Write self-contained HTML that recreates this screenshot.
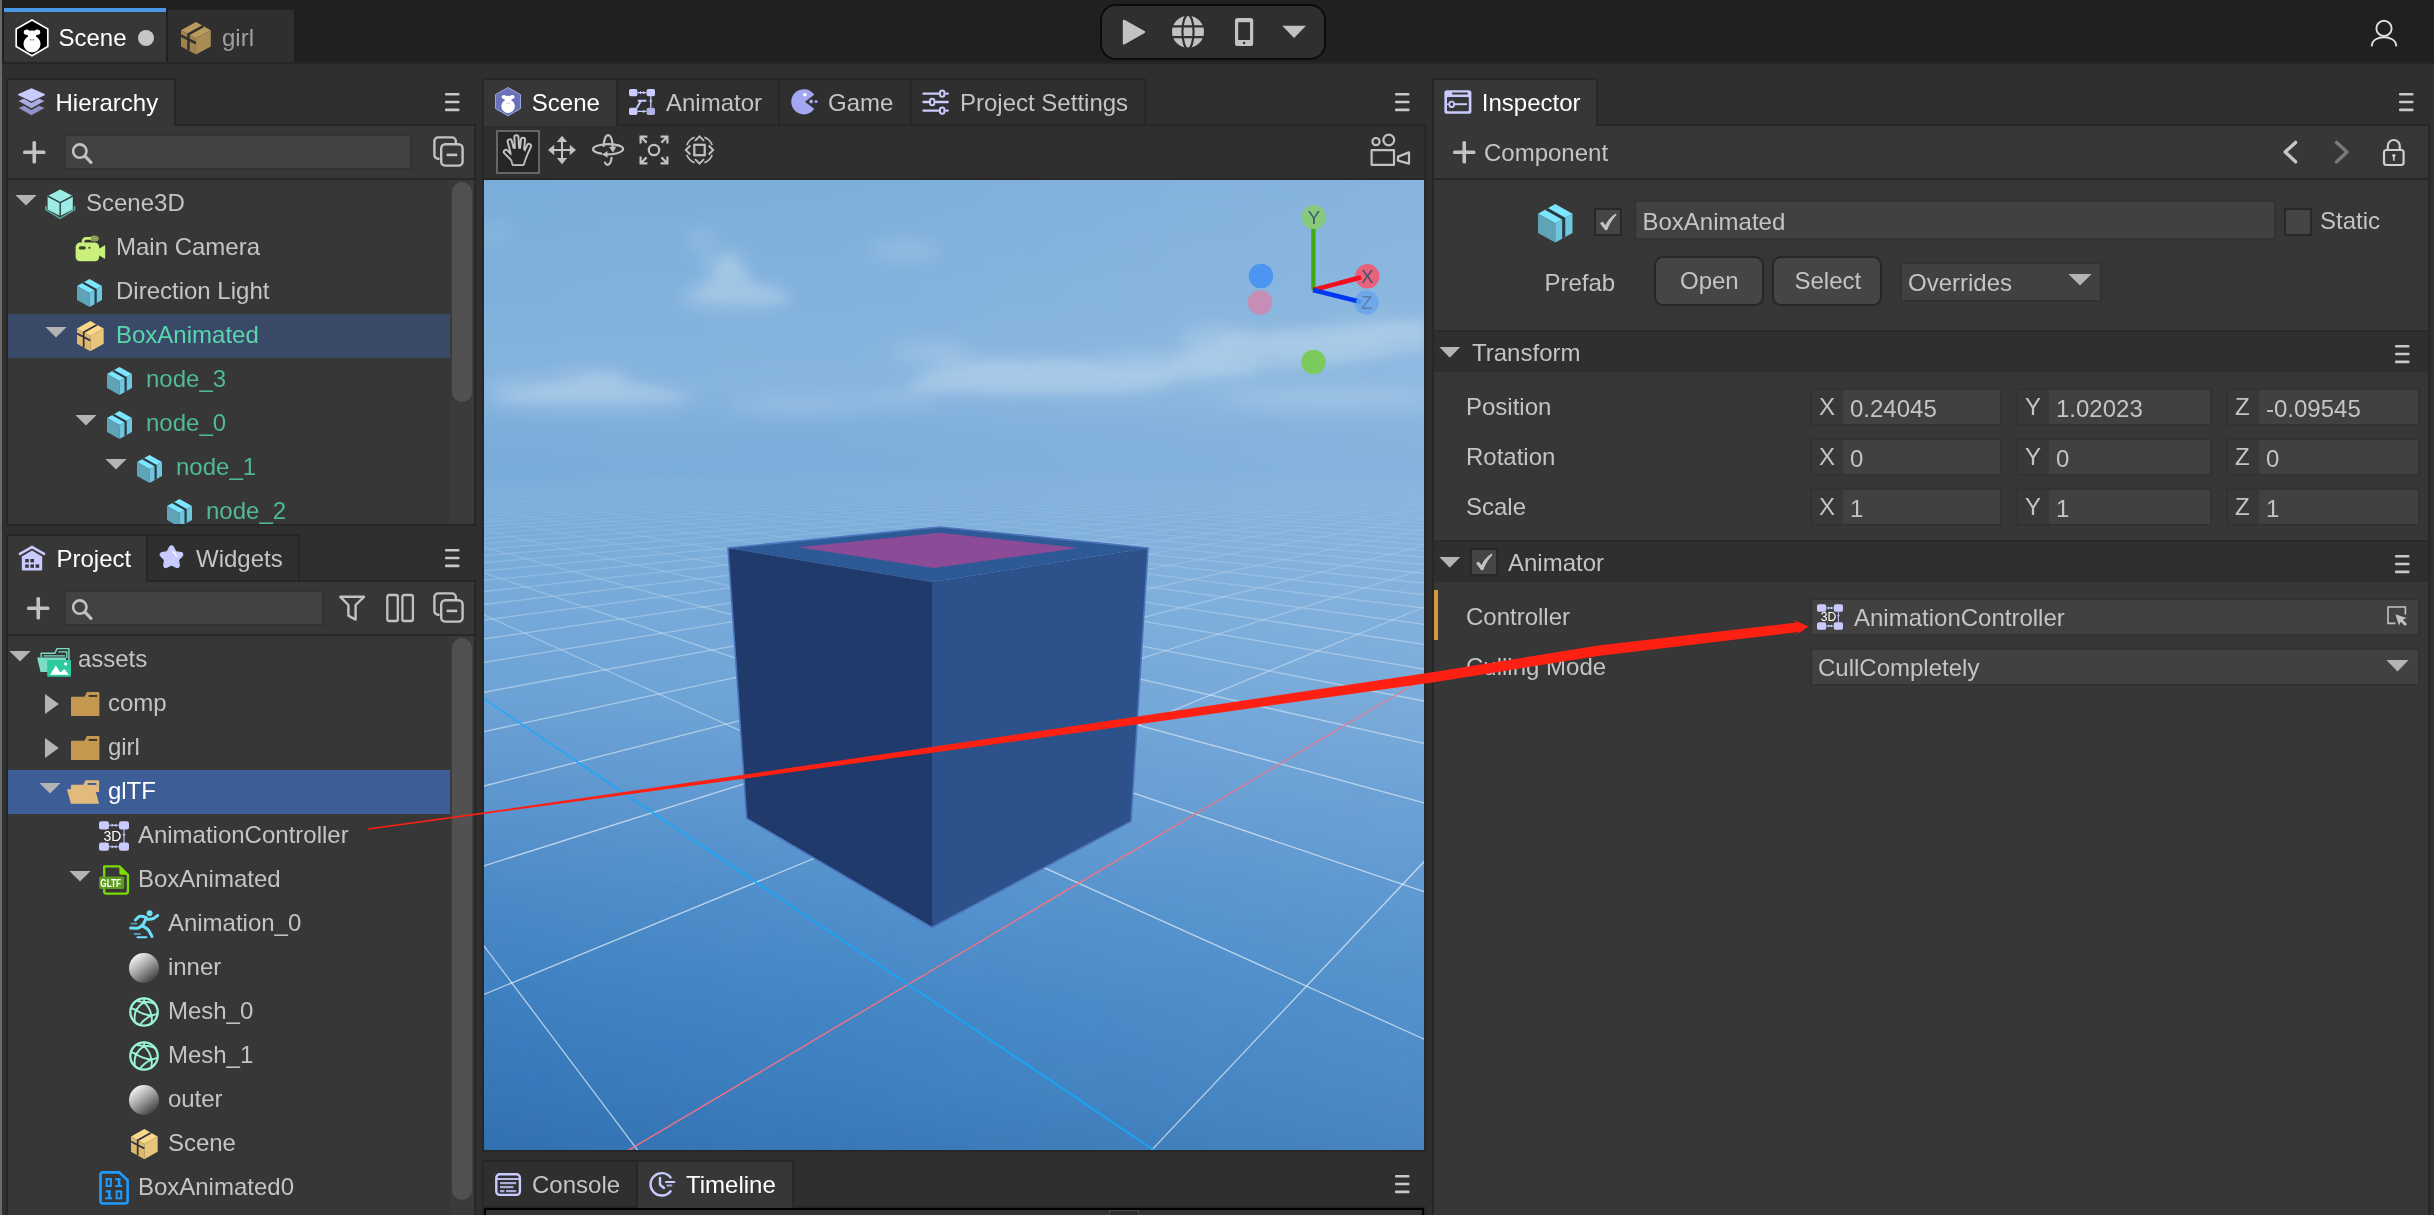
<!DOCTYPE html>
<html><head><meta charset="utf-8"><title>Scene</title><style>
html,body{margin:0;padding:0;background:#2f2f2f;}
body{width:2434px;height:1215px;overflow:hidden;position:relative;font-family:"Liberation Sans",sans-serif;font-size:24px;}
div,span.t,svg{position:absolute;}
#app{left:0;top:0;width:2434px;height:1215px;will-change:transform;}
span.t{line-height:27px;white-space:nowrap;font-size:24px;}
svg{overflow:visible;}
</style></head><body><div id="app">
<div style="left:0px;top:0px;width:2434px;height:1215px;background:#2f2f2f;"></div>
<div style="left:0px;top:0px;width:2434px;height:62px;background:#202020;"></div>
<div style="left:0px;top:62px;width:2434px;height:2px;background:#262626;"></div>
<div style="left:0px;top:0px;width:2px;height:1215px;background:#6a6a6a;"></div>
<div style="left:4px;top:8px;width:162px;height:4px;background:#4a98e8;"></div>
<div style="left:4px;top:12px;width:162px;height:50px;background:#373737;"></div>
<div style="left:168px;top:10px;width:126px;height:52px;background:#2f2f2f;"></div>
<svg style="left:15px;top:19px" width="34" height="38" viewBox="0 0 34 38"><path d="M17 0.9 L32.8 9.9 V27.6 L17 36.8 L1.2 27.6 V9.9 Z" fill="#000" stroke="#fff" stroke-width="1.7" stroke-linejoin="round"/><g transform="translate(17 18.85) scale(1.0)" fill="#fff"><ellipse cx="-5.2" cy="-5.7" rx="3" ry="2.6"/><ellipse cx="5.2" cy="-5.7" rx="3" ry="2.6"/><ellipse cx="0" cy="-4.2" rx="5.4" ry="3.1"/><rect x="-3.7" y="-4" width="7.4" height="5"/><circle cx="0" cy="6.05" r="8.5"/><rect x="-2.2" y="1.55" width="1.7" height="0.9" rx=".4" fill="#000"/><rect x="0.5" y="1.55" width="1.7" height="0.9" rx=".4" fill="#000"/></g></svg>
<span class="t " style="left:58.5px;top:24px;color:#ffffff;">Scene</span>
<div style="left:138px;top:30px;width:16px;height:16px;border-radius:8px;background:#c6c6c6"></div>
<svg style="left:181.1px;top:21.9px" width="29.8" height="32.6" viewBox="0 0 29.8 32.6"><path d="M14.9 0 L29.8 8.15 L14.9 16.3 L0 8.15 Z" fill="#ba9b5d"/><path d="M0 8.15 L14.9 16.3 L14.9 32.6 L0 24.450000000000003 Z" fill="#9f834e"/><path d="M29.8 8.15 L14.9 16.3 L14.9 32.6 L29.8 24.450000000000003 Z" fill="#a98c54"/><path d="M22.35 4.075 L7.45 12.225000000000001 V28.525000000000002 M0 13.6105 L14.9 21.19" fill="none" stroke="#2e2e2e" stroke-width="2.46"/></svg>
<span class="t " style="left:222px;top:24px;color:#a0a0a0;">girl</span>
<div style="left:1100px;top:4px;width:226px;height:56px;border-radius:16px;background:#2f2f2f;border:2px solid #0c0c0c;box-sizing:border-box"></div>
<svg style="left:0px;top:0px" width="2434" height="64" viewBox="0 0 2434 64"><g fill="#c2c2c2"><path d="M1122.8 21.2 Q1122.8 19 1124.8 20 L1144.6 31 Q1146.2 32 1144.6 33 L1124.8 44.2 Q1122.8 45.2 1122.8 43 Z"/></g><g><circle cx="1188" cy="31.8" r="16" fill="#c2c2c2"/><g fill="none" stroke="#2f2f2f" stroke-width="2.2"><path d="M1171 26.4 H1205 M1171 37.2 H1205"/><ellipse cx="1188" cy="31.8" rx="5.6" ry="17"/></g></g><rect x="1235" y="18" width="18.2" height="28" rx="2.6" fill="#c2c2c2"/><rect x="1238.2" y="22.2" width="11.8" height="17.8" fill="#2f2f2f"/><circle cx="1244.1" cy="43" r="1.3" fill="#2f2f2f"/><path d="M1282.2 25.8 H1306 L1294.1 38 Z" fill="#c2c2c2"/></svg>
<svg style="left:0px;top:0px" width="2434" height="64" viewBox="0 0 2434 64"><g fill="none" stroke="#dedede" stroke-width="1.9" stroke-linecap="round"><circle cx="2384" cy="28.4" r="7.6"/><path d="M2371.8 45.6 C2372.6 34.4 2395.4 34.4 2396.2 45.6"/></g></svg>
<div style="left:6px;top:124px;width:470px;height:402px;background:#272727;"></div>
<div style="left:6px;top:78px;width:170px;height:48px;background:#272727;"></div>
<div style="left:8px;top:80px;width:166px;height:46px;background:#373737;"></div>
<div style="left:8px;top:126px;width:466px;height:52px;background:#373737;"></div>
<div style="left:8px;top:180px;width:466px;height:344px;background:#373737;"></div>
<div style="left:450px;top:180px;width:24px;height:344px;background:#3a3a3a;"></div>
<div style="left:452px;top:182px;width:20px;height:220px;border-radius:10px;background:#515151"></div>
<svg style="left:18px;top:88px" width="27" height="28" viewBox="0 0 27 28"><path d="M13.5 14.4 L26.4 20 L13.5 27.2 L0.6 20 Z" fill="#8f92c4"/><path d="M13.5 9 L26.4 14.8 L13.5 22 L0.6 14.8 Z" fill="#363636"/><path d="M13.5 7.2 L26.4 13 L13.5 20.2 L0.6 13 Z" fill="#abaee2"/><path d="M13.5 2 L26.4 7.8 L13.5 15 L0.6 7.8 Z" fill="#363636"/><path d="M13.5 0.2 L26.6 6 Q27.4 6.6 26.6 7.2 L13.5 13.4 L0.4 7.2 Q-0.4 6.6 0.4 6 Z" fill="#c9cbff"/></svg>
<span class="t " style="left:55.5px;top:89px;color:#ffffff;">Hierarchy</span>
<svg style="left:444.5px;top:93px;" width="15" height="19" viewBox="0 0 15 19"><g fill="#c8c8c8"><rect x="0" y="0" width="14.5" height="2.6" rx="1"/><rect x="0" y="7.7" width="14.5" height="2.6" rx="1"/><rect x="0" y="15.6" width="14.5" height="2.6" rx="1"/></g></svg>
<svg style="left:22.75px;top:140.75px" width="22.5" height="22.5" viewBox="0 0 22.5 22.5"><g fill="#c2c2c2"><rect x="0" y="9.45" width="22.5" height="3.6" rx="1.5"/><rect x="9.45" y="0" width="3.6" height="22.5" rx="1.5"/></g></svg>
<div style="left:64.5px;top:134.5px;width:347px;height:35px;background:#323232;"></div>
<div style="left:66px;top:136px;width:344px;height:32px;background:#424242;"></div>
<svg style="left:72px;top:141px" width="22" height="24" viewBox="0 0 22 24"><g fill="none" stroke="#c2c2c2" stroke-width="2.6" stroke-linecap="round"><circle cx="7.8" cy="10.1" r="6.7"/><path d="M12.9 15.2 L19 21.4" stroke-width="3.2"/></g></svg>
<svg style="left:432.5px;top:136.2px" width="32" height="32" viewBox="0 0 32 32"><g fill="none" stroke="#c2c2c2" stroke-width="2.4"><path d="M6.5 22.8 H5.2 A3.8 3.8 0 0 1 1.4 19 V5.2 A3.8 3.8 0 0 1 5.2 1.4 H19 A3.8 3.8 0 0 1 22.8 5.2 V7"/><rect x="8.2" y="8.2" width="21.4" height="21.4" rx="4.2"/><path d="M13.6 18.9 H24.2" stroke-width="2.6"/></g></svg>
<div style="left:8px;top:180px;width:442px;height:344px;overflow:hidden;background:none">
<svg style="left:8px;top:15px" width="20" height="10" viewBox="0 0 20 10"><path d="M-0.6 0 L20.6 0 L10.0 10.4 Z" fill="#b4b4b4"/></svg>
<svg style="left:37px;top:8.5px" width="31" height="31" viewBox="0 0 31 31"><path d="M0.8 17 V20.6 L15.2 29.4 L29.6 20.6 V17" fill="none" stroke="#5ba5a0" stroke-width="1.6"/><path d="M15.2 0.4 L27.8 7 V20.4 L15.2 27 L2.6 20.4 V7 Z" fill="#9dece4"/><path d="M2.6 7 L15.2 13.6 L27.8 7 M15.2 13.6 V27" fill="none" stroke="#2f4a4a" stroke-width="1.5"/></svg>
<span class="t " style="left:78px;top:9px;color:#c4c4c4;">Scene3D</span>
<svg style="left:67px;top:55px" width="31" height="27" viewBox="0 0 31 27"><ellipse cx="19.4" cy="3.4" rx="4.4" ry="3" fill="#8ea255"/><path d="M8 9 V6.6 Q8 3.4 11.4 3.4 H16" fill="none" stroke="#c9f07c" stroke-width="2.6"/><rect x="0.6" y="7.6" width="23.6" height="18.6" rx="4.4" fill="#c9f07c"/><path d="M22 15 L29.4 10.4 Q30.2 10 30.2 11 V23 Q30.2 24 29.4 23.6 L22 19.2 Z" fill="#c9f07c"/><rect x="3.8" y="11.2" width="7" height="3.4" rx="1.7" fill="#3c4a2a"/><circle cx="14.4" cy="12.8" r="1.1" fill="#3c4a2a"/></svg>
<span class="t " style="left:108px;top:53px;color:#c4c4c4;">Main Camera</span>
<svg style="left:69px;top:98.6px" width="25" height="28" viewBox="0 0 25 28"><path d="M12.5 0 L25 7.0 L12.5 14.0 L0 7.0 Z" fill="#7de6ff"/><path d="M0 7.0 L12.5 14.0 L12.5 28 L0 21.0 Z" fill="#5fa3b6"/><path d="M25 7.0 L12.5 14.0 L12.5 28 L25 21.0 Z" fill="#6ec6df"/><path d="M5.00 4.20 L7.25 2.94 L19.75 9.94 V23.94 L17.50 25.20 V11.20 Z" fill="#2b3a42"/></svg>
<span class="t " style="left:108px;top:97px;color:#c4c4c4;">Direction Light</span>
<div style="left:0px;top:134px;width:442px;height:44px;background:#3b4968;"></div>
<svg style="left:38px;top:147px" width="20" height="10" viewBox="0 0 20 10"><path d="M-0.6 0 L20.6 0 L10.0 10.4 Z" fill="#b4b4b4"/></svg>
<svg style="left:68.7px;top:140.7px" width="26.7" height="30.2" viewBox="0 0 26.7 30.2"><path d="M13.35 0 L26.7 7.55 L13.35 15.1 L0 7.55 Z" fill="#fad887"/><path d="M0 7.55 L13.35 15.1 L13.35 30.2 L0 22.65 Z" fill="#deb86c"/><path d="M26.7 7.55 L13.35 15.1 L13.35 30.2 L26.7 22.65 Z" fill="#e9c57a"/><path d="M20.025 3.775 L6.675 11.325 V26.425 M0 12.6085 L13.35 19.63" fill="none" stroke="#2c3048" stroke-width="1.70"/></svg>
<span class="t " style="left:108px;top:141px;color:#5ad6ad;">BoxAnimated</span>
<svg style="left:99px;top:186.6px" width="25" height="28" viewBox="0 0 25 28"><path d="M12.5 0 L25 7.0 L12.5 14.0 L0 7.0 Z" fill="#7de6ff"/><path d="M0 7.0 L12.5 14.0 L12.5 28 L0 21.0 Z" fill="#5fa3b6"/><path d="M25 7.0 L12.5 14.0 L12.5 28 L25 21.0 Z" fill="#6ec6df"/><path d="M5.00 4.20 L7.25 2.94 L19.75 9.94 V23.94 L17.50 25.20 V11.20 Z" fill="#2b3a42"/></svg>
<span class="t " style="left:138px;top:185px;color:#4fba97;">node_3</span>
<svg style="left:68px;top:235px" width="20" height="10" viewBox="0 0 20 10"><path d="M-0.6 0 L20.6 0 L10.0 10.4 Z" fill="#b4b4b4"/></svg>
<svg style="left:99px;top:230.6px" width="25" height="28" viewBox="0 0 25 28"><path d="M12.5 0 L25 7.0 L12.5 14.0 L0 7.0 Z" fill="#7de6ff"/><path d="M0 7.0 L12.5 14.0 L12.5 28 L0 21.0 Z" fill="#5fa3b6"/><path d="M25 7.0 L12.5 14.0 L12.5 28 L25 21.0 Z" fill="#6ec6df"/><path d="M5.00 4.20 L7.25 2.94 L19.75 9.94 V23.94 L17.50 25.20 V11.20 Z" fill="#2b3a42"/></svg>
<span class="t " style="left:138px;top:229px;color:#4fba97;">node_0</span>
<svg style="left:98px;top:279px" width="20" height="10" viewBox="0 0 20 10"><path d="M-0.6 0 L20.6 0 L10.0 10.4 Z" fill="#b4b4b4"/></svg>
<svg style="left:129px;top:274.6px" width="25" height="28" viewBox="0 0 25 28"><path d="M12.5 0 L25 7.0 L12.5 14.0 L0 7.0 Z" fill="#7de6ff"/><path d="M0 7.0 L12.5 14.0 L12.5 28 L0 21.0 Z" fill="#5fa3b6"/><path d="M25 7.0 L12.5 14.0 L12.5 28 L25 21.0 Z" fill="#6ec6df"/><path d="M5.00 4.20 L7.25 2.94 L19.75 9.94 V23.94 L17.50 25.20 V11.20 Z" fill="#2b3a42"/></svg>
<span class="t " style="left:168px;top:273px;color:#4fba97;">node_1</span>
<svg style="left:159px;top:318.6px" width="25" height="28" viewBox="0 0 25 28"><path d="M12.5 0 L25 7.0 L12.5 14.0 L0 7.0 Z" fill="#7de6ff"/><path d="M0 7.0 L12.5 14.0 L12.5 28 L0 21.0 Z" fill="#5fa3b6"/><path d="M25 7.0 L12.5 14.0 L12.5 28 L25 21.0 Z" fill="#6ec6df"/><path d="M5.00 4.20 L7.25 2.94 L19.75 9.94 V23.94 L17.50 25.20 V11.20 Z" fill="#2b3a42"/></svg>
<span class="t " style="left:198px;top:317px;color:#4fba97;">node_2</span>
</div>
<div style="left:6px;top:580px;width:470px;height:635px;background:#272727;"></div>
<div style="left:6px;top:534px;width:142px;height:48px;background:#272727;"></div>
<div style="left:8px;top:536px;width:138px;height:46px;background:#373737;"></div>
<div style="left:146px;top:534px;width:154px;height:50px;background:#272727;"></div>
<div style="left:148px;top:536px;width:150px;height:44px;background:#2f2f2f;"></div>
<div style="left:8px;top:582px;width:466px;height:52px;background:#373737;"></div>
<div style="left:8px;top:636px;width:466px;height:579px;background:#373737;"></div>
<div style="left:450px;top:636px;width:24px;height:579px;background:#3a3a3a;"></div>
<div style="left:452px;top:638px;width:20px;height:562px;border-radius:10px;background:#515151"></div>
<svg style="left:18px;top:545px" width="28" height="26" viewBox="0 0 28 26"><path d="M14 0.4 L27.6 8.2 L26.4 10.4 L14 3.4 L1.6 10.4 L0.4 8.2 Z" fill="#c9cbff"/><path d="M3.8 11.4 L14 5.6 L24.2 11.4 V24.6 Q24.2 25.6 23.2 25.6 H4.8 Q3.8 25.6 3.8 24.6 Z" fill="#c9cbff"/><g fill="#363636"><rect x="7.2" y="14" width="3.6" height="3.4"/><rect x="12.4" y="14" width="3.6" height="3.4"/><rect x="7.2" y="19.4" width="3.6" height="3.4"/><rect x="12.4" y="19.4" width="3.6" height="3.4"/><rect x="17.6" y="19.4" width="3.6" height="3.4"/></g></svg>
<span class="t " style="left:56.5px;top:545px;color:#ffffff;">Project</span>
<svg style="left:158.4px;top:544px" width="27" height="27" viewBox="0 0 27 27"><polygon points="13.50,4.00 16.44,9.55 22.63,10.63 18.26,15.15 19.14,21.37 13.50,18.60 7.86,21.37 8.74,15.15 4.37,10.63 10.56,9.55" fill="#c9cbff" stroke="#c9cbff" stroke-width="5.4" stroke-linejoin="round"/><path d="M14.8 7.6 Q17.6 9 18.4 12.4" fill="none" stroke="#fff" stroke-width="1.2" stroke-linecap="round"/></svg>
<span class="t " style="left:196px;top:545px;color:#c4c4c4;">Widgets</span>
<svg style="left:444.5px;top:549px;" width="15" height="19" viewBox="0 0 15 19"><g fill="#c8c8c8"><rect x="0" y="0" width="14.5" height="2.6" rx="1"/><rect x="0" y="7.7" width="14.5" height="2.6" rx="1"/><rect x="0" y="15.6" width="14.5" height="2.6" rx="1"/></g></svg>
<svg style="left:26.75px;top:596.75px" width="22.5" height="22.5" viewBox="0 0 22.5 22.5"><g fill="#c2c2c2"><rect x="0" y="9.45" width="22.5" height="3.6" rx="1.5"/><rect x="9.45" y="0" width="3.6" height="22.5" rx="1.5"/></g></svg>
<div style="left:64.5px;top:590.5px;width:259px;height:35px;background:#323232;"></div>
<div style="left:66px;top:592px;width:256px;height:32px;background:#424242;"></div>
<svg style="left:72px;top:597px" width="22" height="24" viewBox="0 0 22 24"><g fill="none" stroke="#c2c2c2" stroke-width="2.6" stroke-linecap="round"><circle cx="7.8" cy="10.1" r="6.7"/><path d="M12.9 15.2 L19 21.4" stroke-width="3.2"/></g></svg>
<svg style="left:338px;top:594px" width="28" height="28" viewBox="0 0 28 28"><path d="M2.3 2.8 H26 L17.6 11 V25.6 L10.4 21.6 V11 Z" fill="none" stroke="#c2c2c2" stroke-width="2.4" stroke-linejoin="round"/></svg>
<svg style="left:386px;top:594px" width="28" height="28" viewBox="0 0 28 28"><g fill="none" stroke="#c2c2c2" stroke-width="2.3"><rect x="1.3" y="1" width="10.5" height="26" rx="1.8"/><rect x="16.4" y="1" width="10.5" height="26" rx="1.8"/></g></svg>
<svg style="left:432.5px;top:592.2px" width="32" height="32" viewBox="0 0 32 32"><g fill="none" stroke="#c2c2c2" stroke-width="2.4"><path d="M6.5 22.8 H5.2 A3.8 3.8 0 0 1 1.4 19 V5.2 A3.8 3.8 0 0 1 5.2 1.4 H19 A3.8 3.8 0 0 1 22.8 5.2 V7"/><rect x="8.2" y="8.2" width="21.4" height="21.4" rx="4.2"/><path d="M13.6 18.9 H24.2" stroke-width="2.6"/></g></svg>
<div style="left:8px;top:636px;width:442px;height:579px;overflow:hidden;background:none">
<svg style="left:2px;top:15px" width="20" height="10" viewBox="0 0 20 10"><path d="M-0.6 0 L20.6 0 L10.0 10.4 Z" fill="#b4b4b4"/></svg>
<svg style="left:29px;top:12px" width="35" height="29" viewBox="0 0 35 29"><path d="M4.1 9.6 V5.3 H17.8 L20 0.6 H31.9 V12" fill="none" stroke="#7bdcc4" stroke-width="1.4" stroke-linejoin="round"/><path d="M21.4 3.9 H29.8 V10 M6.6 7.9 H28" fill="none" stroke="#7bdcc4" stroke-width="1.3"/><path d="M0.1 9.4 H29 V14 H12 V23.9 H3.5 Z" fill="#7bdcc4"/><rect x="10.2" y="11.9" width="23.8" height="16.9" rx="0.8" fill="#2ecba1"/><path d="M13 26.7 L18.9 17.6 L23.3 24.4 L27.4 20.9 L31.9 26.7 Z" fill="#fff"/><circle cx="28.7" cy="15.9" r="1.6" fill="#fff"/></svg>
<span class="t " style="left:69.9px;top:9px;color:#c4c4c4;">assets</span>
<svg style="left:36.8px;top:58.2px" width="14" height="20" viewBox="0 0 14 20"><path d="M0 -0.1 L13.8 9.9 L0 19.9 Z" fill="#b4b4b4"/></svg>
<svg style="left:63px;top:56px" width="29" height="24" viewBox="0 0 29 24"><path d="M15.9 0.1 H27.4 Q28.4 0.1 28.4 1.1 V23.9 H0 V5.8 Q0 4.8 1 4.8 H13.4 Z" fill="#c4984f"/><rect x="17.6" y="3" width="8.5" height="1.9" fill="#3a332a"/></svg>
<span class="t " style="left:99.9px;top:53px;color:#c4c4c4;">comp</span>
<svg style="left:36.8px;top:102.2px" width="14" height="20" viewBox="0 0 14 20"><path d="M0 -0.1 L13.8 9.9 L0 19.9 Z" fill="#b4b4b4"/></svg>
<svg style="left:63px;top:100px" width="29" height="24" viewBox="0 0 29 24"><path d="M15.9 0.1 H27.4 Q28.4 0.1 28.4 1.1 V23.9 H0 V5.8 Q0 4.8 1 4.8 H13.4 Z" fill="#c4984f"/><rect x="17.6" y="3" width="8.5" height="1.9" fill="#3a332a"/></svg>
<span class="t " style="left:99.9px;top:97px;color:#c4c4c4;">girl</span>
<div style="left:0px;top:134px;width:442px;height:44px;background:#3d5d96;"></div>
<svg style="left:32px;top:147px" width="20" height="10" viewBox="0 0 20 10"><path d="M-0.6 0 L20.6 0 L10.0 10.4 Z" fill="#b4b4b4"/></svg>
<svg style="left:60px;top:144px" width="32" height="24" viewBox="0 0 32 24"><path d="M17.6 0.2 H30.1 Q31.1 0.2 31.1 1.2 V12 H2.9 V5.8 Q2.9 4.8 3.9 4.8 H15.2 Z" fill="#e2ba7b"/><rect x="19.6" y="3" width="8.8" height="1.9" fill="#3d5d96"/><path d="M-1.1 9.3 H27.1 L31.1 23.8 H2.9 Z" fill="#e2ba7b"/></svg>
<span class="t " style="left:99.9px;top:141px;color:#ffffff;">glTF</span>
<svg style="left:91px;top:185px" width="30" height="30" viewBox="0 0 30 30"><g transform="scale(1.0)"><g fill="#c9cbff"><rect x="0" y="0.2" width="10" height="8.2" rx="2.2"/><rect x="20" y="0.2" width="10" height="8.2" rx="2.2"/><rect x="0" y="21.6" width="10" height="8.2" rx="2.2"/><rect x="20" y="21.6" width="10" height="8.2" rx="2.2"/></g><g stroke="#c9cbff" stroke-width="1.1" fill="none"><path d="M10 4.3 H20 M10 25.7 H20 M25.0 8.2 V21.8"/></g><g fill="#c9cbff"><path d="M12.6 2.4999999999999996 L15 4.3 L12.6 6.1 Z"/><path d="M17.4 2.4999999999999996 L15 4.3 L17.4 6.1 Z"/><path d="M12.6 23.9 L15 25.7 L12.6 27.5 Z"/><path d="M17.4 23.9 L15 25.7 L17.4 27.5 Z"/><path d="M23.2 13 L25.0 15 L26.8 13 Z"/></g><text x="4.4" y="19.9" font-family="Liberation Sans, sans-serif" font-size="14" fill="#fff">3D</text></g></svg>
<span class="t " style="left:129.9px;top:185px;color:#c4c4c4;">AnimationController</span>
<svg style="left:62px;top:235px" width="20" height="10" viewBox="0 0 20 10"><path d="M-0.6 0 L20.6 0 L10.0 10.4 Z" fill="#b4b4b4"/></svg>
<svg style="left:91px;top:229px" width="30" height="30" viewBox="0 0 30 30"><path d="M5.2 1.3 H20.4 L28.9 9.8 V26.6 Q28.9 28.6 26.9 28.6 H7.2 Q5.2 28.6 5.2 26.6 Z" fill="none" stroke="#7ddb05" stroke-width="2.3" stroke-linejoin="round"/><path d="M20.4 1.3 V8.2 Q20.4 9.8 22 9.8 H28.9 Z" fill="#7ddb05"/><rect x="0.3" y="11.6" width="24.9" height="12.3" rx="1.6" fill="#5f9d20"/><text x="1.3" y="21.7" font-family="Liberation Sans, DejaVu Sans, sans-serif" font-weight="bold" font-size="10.2" textLength="20.8" lengthAdjust="spacingAndGlyphs" fill="#fff">GLTF</text></svg>
<span class="t " style="left:129.9px;top:229px;color:#c4c4c4;">BoxAnimated</span>
<svg style="left:121px;top:274px" width="30" height="29" viewBox="0 0 30 29"><circle cx="20.6" cy="3.3" r="2.95" fill="#6fe0fa"/><g fill="none" stroke="#6fe0fa" stroke-width="3" stroke-linecap="round" stroke-linejoin="round"><path d="M17.4 8 L13.3 16"/><path d="M16.8 7.3 Q12 5.6 9.9 6.6 L6.4 10"/><path d="M18.6 9.2 Q22 9.6 24.6 8.4 L28.7 5.6"/><path d="M13.8 16.2 Q18 18.4 19.6 20.2 L23 26.4"/><path d="M13 15.4 Q10 18.6 7.6 18.2 L1.6 18"/></g><g stroke="#4c9fb2" stroke-width="1.9" stroke-linecap="round"><path d="M2.4 13.6 H7.4 M5.6 24 H10.8"/></g><path d="M8.4 27.2 H17.4" stroke="#6fe0fa" stroke-width="1.9" stroke-linecap="round"/></svg>
<span class="t " style="left:159.9px;top:273px;color:#c4c4c4;">Animation_0</span>
<svg style="left:121px;top:317px" width="30" height="30" viewBox="0 0 30 30"><defs><linearGradient id="sg121_317" x1="0.18" y1="0.1" x2="0.82" y2="0.95"><stop offset="0" stop-color="#f2f2f2"/><stop offset="0.45" stop-color="#a4a4a4"/><stop offset="1" stop-color="#3a3a3a"/></linearGradient></defs><circle cx="15" cy="15" r="15" fill="url(#sg121_317)"/></svg>
<span class="t " style="left:159.9px;top:317px;color:#c4c4c4;">inner</span>
<svg style="left:121px;top:361px" width="30" height="30" viewBox="0 0 30 30"><g fill="none" stroke="#9af4d4" stroke-linecap="round"><circle cx="15" cy="15" r="13.7" stroke-width="2.3"/><g stroke-width="1.9"><path d="M7.1 13.1 Q10 8 14.85 5.3 L15.4 1.2"/><path d="M14.85 5.3 Q21 10 22.3 18.6"/><path d="M7.1 13.1 Q13 17.5 22.3 18.6"/><path d="M22.3 18.6 Q15 22 10.8 28"/><path d="M22.3 18.6 Q23.4 22 22.4 26.4"/><path d="M22.3 18.6 L28.4 16.8"/><path d="M7.1 13.1 Q5 18 5.8 24.4"/><path d="M7.1 13.1 L1.8 10.8"/><path d="M14.85 5.3 Q21 4.4 25.6 6.8"/><path d="M14.85 5.3 L7.4 3.8"/></g></g><g fill="#9af4d4"><circle cx="14.85" cy="5.3" r="1.7"/><circle cx="7.1" cy="13.1" r="1.7"/><circle cx="22.3" cy="18.6" r="1.7"/></g></svg>
<span class="t " style="left:159.9px;top:361px;color:#c4c4c4;">Mesh_0</span>
<svg style="left:121px;top:405px" width="30" height="30" viewBox="0 0 30 30"><g fill="none" stroke="#9af4d4" stroke-linecap="round"><circle cx="15" cy="15" r="13.7" stroke-width="2.3"/><g stroke-width="1.9"><path d="M7.1 13.1 Q10 8 14.85 5.3 L15.4 1.2"/><path d="M14.85 5.3 Q21 10 22.3 18.6"/><path d="M7.1 13.1 Q13 17.5 22.3 18.6"/><path d="M22.3 18.6 Q15 22 10.8 28"/><path d="M22.3 18.6 Q23.4 22 22.4 26.4"/><path d="M22.3 18.6 L28.4 16.8"/><path d="M7.1 13.1 Q5 18 5.8 24.4"/><path d="M7.1 13.1 L1.8 10.8"/><path d="M14.85 5.3 Q21 4.4 25.6 6.8"/><path d="M14.85 5.3 L7.4 3.8"/></g></g><g fill="#9af4d4"><circle cx="14.85" cy="5.3" r="1.7"/><circle cx="7.1" cy="13.1" r="1.7"/><circle cx="22.3" cy="18.6" r="1.7"/></g></svg>
<span class="t " style="left:159.9px;top:405px;color:#c4c4c4;">Mesh_1</span>
<svg style="left:121px;top:449px" width="30" height="30" viewBox="0 0 30 30"><defs><linearGradient id="sg121_449" x1="0.18" y1="0.1" x2="0.82" y2="0.95"><stop offset="0" stop-color="#f2f2f2"/><stop offset="0.45" stop-color="#a4a4a4"/><stop offset="1" stop-color="#3a3a3a"/></linearGradient></defs><circle cx="15" cy="15" r="15" fill="url(#sg121_449)"/></svg>
<span class="t " style="left:159.9px;top:449px;color:#c4c4c4;">outer</span>
<svg style="left:122.6px;top:492.9px" width="26.7" height="30.2" viewBox="0 0 26.7 30.2"><path d="M13.35 0 L26.7 7.55 L13.35 15.1 L0 7.55 Z" fill="#fad887"/><path d="M0 7.55 L13.35 15.1 L13.35 30.2 L0 22.65 Z" fill="#deb86c"/><path d="M26.7 7.55 L13.35 15.1 L13.35 30.2 L26.7 22.65 Z" fill="#e9c57a"/><path d="M20.025 3.775 L6.675 11.325 V26.425 M0 12.6085 L13.35 19.63" fill="none" stroke="#2c3048" stroke-width="1.70"/></svg>
<span class="t " style="left:159.9px;top:493px;color:#c4c4c4;">Scene</span>
<svg style="left:91px;top:535px" width="30" height="34" viewBox="0 0 30 34"><path d="M4 1.4 H20.2 L28.6 9.2 V30 Q28.6 32.5 26.1 32.5 H4 Q1.5 32.5 1.5 30 V3.9 Q1.5 1.4 4 1.4 Z" fill="none" stroke="#1e9cff" stroke-width="2.6" stroke-linejoin="round"/><g fill="none" stroke="#1e9cff" stroke-width="2"><rect x="7.6" y="8.1" width="4.3" height="6.9"/><rect x="17.6" y="20.4" width="4.6" height="6.9"/></g><g fill="#1e9cff"><rect x="16.2" y="7.1" width="5.2" height="2.2"/><rect x="18.8" y="7.1" width="2.6" height="8"/><rect x="16.2" y="14.1" width="7" height="1.9"/><rect x="6.6" y="19.4" width="4.9" height="2.1"/><rect x="9.1" y="19.4" width="2.5" height="8"/><rect x="6.2" y="26.4" width="7" height="1.9"/></g></svg>
<span class="t " style="left:129.9px;top:537px;color:#c4c4c4;">BoxAnimated0</span>
</div>
<div style="left:482px;top:124px;width:944px;height:1028px;background:#272727;"></div>
<div style="left:482px;top:78px;width:136px;height:48px;background:#272727;"></div>
<div style="left:484px;top:80px;width:132px;height:46px;background:#373737;"></div>
<div style="left:616px;top:78px;width:164px;height:50px;background:#272727;"></div>
<div style="left:618px;top:80px;width:160px;height:44px;background:#2f2f2f;"></div>
<div style="left:778px;top:78px;width:134px;height:50px;background:#272727;"></div>
<div style="left:780px;top:80px;width:130px;height:44px;background:#2f2f2f;"></div>
<div style="left:910px;top:78px;width:236px;height:50px;background:#272727;"></div>
<div style="left:912px;top:80px;width:232px;height:44px;background:#2f2f2f;"></div>
<div style="left:484px;top:126px;width:940px;height:52px;background:#2f2f2f;"></div>
<svg style="left:495px;top:87.2px" width="26" height="30" viewBox="0 0 26 30"><path d="M13.1 0.5 L25.5 7.6 V21.6 L13.1 28.9 L0.5 21.6 V7.6 Z" fill="#6872ba" stroke="#a9aee2" stroke-width="0.9" stroke-linejoin="round"/><g transform="translate(13.1 14.5) scale(0.79)" fill="#fff"><ellipse cx="-5.2" cy="-5.7" rx="3" ry="2.6"/><ellipse cx="5.2" cy="-5.7" rx="3" ry="2.6"/><ellipse cx="0" cy="-4.2" rx="5.4" ry="3.1"/><rect x="-3.7" y="-4" width="7.4" height="5"/><circle cx="0" cy="6.05" r="8.5"/><rect x="-2.2" y="1.55" width="1.7" height="0.9" rx=".4" fill="#6872ba"/><rect x="0.5" y="1.55" width="1.7" height="0.9" rx=".4" fill="#6872ba"/></g></svg>
<span class="t " style="left:531.8px;top:89px;color:#ffffff;">Scene</span>
<svg style="left:629px;top:89px" width="26" height="26" viewBox="0 0 26 26"><g fill="#c9cbff"><rect x="0" y="0" width="8.4" height="7.2" rx="1.7"/><rect x="17.6" y="0" width="8.4" height="7.2" rx="1.7"/><rect x="0" y="18.8" width="8.4" height="7.2" rx="1.7"/><rect x="17.6" y="18.8" width="8.4" height="7.2" rx="1.7" fill="#aeb1e2"/></g><g fill="none" stroke="#c9cbff" stroke-width="1.3"><path d="M8.4 3.6 H17.6 M21.8 7.2 V18.8 M8.4 22.4 H17.6"/><path d="M7.8 19 L11.8 12 M8.8 11.8 H17.4" stroke-width="2"/></g><g fill="#c9cbff"><path d="M11 1.7 L13.2 3.6 L11 5.5 Z"/><path d="M15.2 1.7 L13 3.6 L15.2 5.5 Z"/><path d="M20 11.4 L21.8 13.6 L23.6 11.4 Z"/><path d="M15.2 20.5 L13 22.4 L15.2 24.3 Z"/></g></svg>
<span class="t " style="left:666px;top:89px;color:#c4c4c4;">Animator</span>
<svg style="left:790.5px;top:89px" width="28" height="26" viewBox="0 0 28 26"><path d="M14.0 12.8 L23.25 5.75 A12.6 12.6 0 1 0 23.25 19.85 Z" fill="#a3a7f2"/><circle cx="13.9" cy="5.7" r="1.8" fill="#fff"/><circle cx="20.1" cy="12.5" r="1.9" fill="#a3a7f2"/><circle cx="25" cy="12.5" r="1.6" fill="#a3a7f2"/></svg>
<span class="t " style="left:828px;top:89px;color:#c4c4c4;">Game</span>
<svg style="left:922.4px;top:89px" width="27" height="27" viewBox="0 0 27 27"><g fill="none" stroke="#c9cbff" stroke-width="2.3" stroke-linecap="round"><path d="M1.4 4.6 H16.6 M24 4.6 H25.8 M1.4 13 H6.6 M14 13 H25.8 M1.4 21.6 H16.6 M24 21.6 H25.8"/><rect x="18" y="1.4" width="4.4" height="6.4" rx="2.2" stroke-width="2"/><rect x="8" y="9.8" width="4.4" height="6.4" rx="2.2" stroke-width="2"/><rect x="18" y="18.4" width="4.4" height="6.4" rx="2.2" stroke-width="2"/></g></svg>
<span class="t " style="left:960px;top:89px;color:#c4c4c4;">Project Settings</span>
<svg style="left:1394.5px;top:93px;" width="15" height="19" viewBox="0 0 15 19"><g fill="#c8c8c8"><rect x="0" y="0" width="14.5" height="2.6" rx="1"/><rect x="0" y="7.7" width="14.5" height="2.6" rx="1"/><rect x="0" y="15.6" width="14.5" height="2.6" rx="1"/></g></svg>
<div style="left:496px;top:130px;width:44px;height:44px;box-sizing:border-box;border:2px solid #666;background:#262626"></div>
<svg style="left:0px;top:0px" width="2434" height="200" viewBox="0 0 2434 200"><g stroke-linecap="round" stroke-linejoin="round"><g stroke="#c2c2c2" fill="#c2c2c2" stroke-width="6.1"><path d="M509.7 141.4 L513.2 154.6 M516.4 137.4 L517.4 154.6 M523 139.9 L521.4 154.6 M529 146 L524.4 156 M505.9 151.9 L514.6 160.6"/><polygon stroke-width="3.9" points="513.4,164 522.8,164 526.4,153.4 522.5,149 512.9,149 511.4,155.6"/></g><g stroke="#262626" fill="#262626" stroke-width="2.2"><path d="M509.7 141.4 L513.2 154.6 M516.4 137.4 L517.4 154.6 M523 139.9 L521.4 154.6 M529 146 L524.4 156 M505.9 151.9 L514.6 160.6"/><polygon stroke-width="0.4" points="513.4,164 522.8,164 526.4,153.4 522.5,149 512.9,149 511.4,155.6"/></g></g><g fill="#c2c2c2" stroke="#c2c2c2"><path d="M562 140 V160 M552 150 H572" stroke-width="2" fill="none"/><path d="M562 135.8 L567.2 142 H556.8 Z M562 164.2 L567.2 158 H556.8 Z M548 150 L554.2 144.8 V155.2 Z M576 150 L569.8 144.8 V155.2 Z" stroke="none"/></g><g fill="none" stroke="#c2c2c2" stroke-width="2.2" stroke-linecap="round"><path d="M601.4 153.6 C595 152.6 592 150.4 593.4 148 C595.4 145 606 143.4 614.6 144.6 C622 145.6 625 148.4 622 151 C619.6 153 612 154.6 604.6 154.4"/><path d="M603.6 146 C604 139 606 134.8 608.4 135.2 C611 135.6 612.6 141 612.8 148.6"/><path d="M611.6 157.8 C611 162 609.8 164.6 607.6 164.8 C606.4 164.8 605.6 164 605 162.6"/></g><g fill="#c2c2c2"><path d="M609.2 147 L613 152.4 L616.4 146.6 Z"/><path d="M607.4 151 L602.2 154.4 L607.6 157.8 Z"/></g><g fill="none" stroke="#c2c2c2" stroke-width="2.2"><circle cx="654" cy="150" r="5.2"/><path d="M640.6 143.4 V136.6 H647.4 M640.8 136.8 L646.6 142.6 M667.4 143.4 V136.6 H660.6 M667.2 136.8 L661.4 142.6 M640.6 156.6 V163.4 H647.4 M640.8 163.2 L646.6 157.4 M667.4 156.6 V163.4 H660.6 M667.2 163.2 L661.4 157.4"/></g><g fill="none" stroke="#c2c2c2" stroke-width="1.5"><path d="M712.20 154.87 A13.6 13.6 0 0 1 704.37 162.70 M694.63 162.70 A13.6 13.6 0 0 1 686.80 154.87 M686.80 145.13 A13.6 13.6 0 0 1 694.63 137.30 M704.37 137.30 A13.6 13.6 0 0 1 712.20 145.13"/><rect x="694.3" y="144.8" width="10.4" height="10.4" stroke-width="2.2"/><path d="M695 140.8 L699.5 136.3 L704 140.8 M695 159.2 L699.5 163.7 L704 159.2 M690.3 145.5 L685.8 150 L690.3 154.5 M708.7 145.5 L713.2 150 L708.7 154.5" stroke-width="1.9"/></g><g fill="none" stroke="#c2c2c2" stroke-width="2.2" stroke-linejoin="round"><circle cx="1376" cy="141.6" r="3.6"/><circle cx="1388.8" cy="140" r="5.4"/><rect x="1371.6" y="150.2" width="22.4" height="14.6"/><path d="M1398 156.6 L1409 152.4 V163.6 L1398 160.6 Z"/></g></svg>
<div style="left:484px;top:180px;width:940px;height:970px;overflow:hidden;background:#7eb0dc"><svg style="left:0;top:0" width="940" height="970" viewBox="484 180 940 970"><defs>
<linearGradient id="sky" x1="0" y1="0" x2="0" y2="1">
 <stop offset="0" stop-color="#7badda"/><stop offset="0.124" stop-color="#80b1dc"/><stop offset="0.215" stop-color="#85b4de"/><stop offset="0.262" stop-color="#7cadda"/>
 <stop offset="0.30" stop-color="#7aacda"/><stop offset="0.39" stop-color="#7aacda"/><stop offset="0.536" stop-color="#6ea4d7"/><stop offset="0.64" stop-color="#6099d2"/>
 <stop offset="0.742" stop-color="#4f8fcc"/><stop offset="0.845" stop-color="#4286c6"/><stop offset="0.948" stop-color="#3a7dbe"/><stop offset="1" stop-color="#3577b7"/>
</linearGradient>
<linearGradient id="fog" x1="0" y1="0" x2="0" y2="1">
 <stop offset="0" stop-color="#80b0dc" stop-opacity="1"/><stop offset="0.12" stop-color="#80b0dc" stop-opacity="0.9"/><stop offset="0.5" stop-color="#7aacda" stop-opacity="0.45"/><stop offset="1" stop-color="#6aa2d6" stop-opacity="0"/>
</linearGradient>
<linearGradient id="gm" gradientUnits="userSpaceOnUse" x1="0" y1="455" x2="0" y2="855">
 <stop offset="0" stop-color="#000"/><stop offset="0.05" stop-color="#050505"/><stop offset="0.12" stop-color="#141414"/><stop offset="0.25" stop-color="#383838"/><stop offset="0.45" stop-color="#808080"/><stop offset="0.7" stop-color="#c8c8c8"/><stop offset="1" stop-color="#fff"/>
</linearGradient>
<linearGradient id="lr" gradientUnits="userSpaceOnUse" x1="484" y1="0" x2="1424" y2="0">
 <stop offset="0" stop-color="#1d4f8f" stop-opacity="0.16"/><stop offset="0.5" stop-color="#2a6ab0" stop-opacity="0.02"/><stop offset="1" stop-color="#58a6ea" stop-opacity="0.05"/>
</linearGradient>
<linearGradient id="skylr" gradientUnits="userSpaceOnUse" x1="484" y1="0" x2="1424" y2="0"><stop offset="0" stop-color="#fff" stop-opacity="0"/><stop offset="0.4" stop-color="#fff" stop-opacity="0.02"/><stop offset="1" stop-color="#fff" stop-opacity="0.09"/></linearGradient>
<linearGradient id="lrmaskg" gradientUnits="userSpaceOnUse" x1="0" y1="640" x2="0" y2="1150"><stop offset="0" stop-color="#000"/><stop offset="1" stop-color="#fff"/></linearGradient>
<mask id="lrmask" maskUnits="userSpaceOnUse" x="484" y="180" width="940" height="970"><rect x="484" y="180" width="940" height="970" fill="url(#lrmaskg)"/></mask>
<mask id="gridmask" maskUnits="userSpaceOnUse" x="484" y="180" width="940" height="970"><rect x="484" y="180" width="940" height="970" fill="url(#gm)"/></mask>
<filter id="blur8" x="-30%" y="-30%" width="160%" height="160%"><feGaussianBlur stdDeviation="9"/></filter>
<filter id="blur4" x="-30%" y="-30%" width="160%" height="160%"><feGaussianBlur stdDeviation="5"/></filter>
</defs><rect x="484" y="180" width="940" height="970" fill="url(#sky)"/><rect x="484" y="640" width="940" height="510" fill="url(#lr)" mask="url(#lrmask)"/><rect x="484" y="180" width="940" height="970" fill="url(#skylr)"/><g mask="url(#gridmask)"><line x1="4975.2" y1="579.2" x2="4890.5" y2="575.6" stroke="#ffffff" stroke-width="1.3" stroke-opacity="0.62"/><line x1="-2934.3" y1="574.9" x2="-2778.2" y2="568.3" stroke="#ffffff" stroke-width="1.3" stroke-opacity="0.62"/><line x1="4952.6" y1="582.6" x2="4634.2" y2="568.6" stroke="#ffffff" stroke-width="1.3" stroke-opacity="0.62"/><line x1="-2916.3" y1="578.3" x2="-2547.9" y2="562.1" stroke="#ffffff" stroke-width="1.3" stroke-opacity="0.62"/><line x1="4928.8" y1="586.1" x2="4403.9" y2="562.3" stroke="#ffffff" stroke-width="1.3" stroke-opacity="0.62"/><line x1="-2985.4" y1="585.9" x2="-2339.6" y2="556.5" stroke="#ffffff" stroke-width="1.3" stroke-opacity="0.62"/><line x1="4998.4" y1="594.3" x2="4195.9" y2="556.6" stroke="#ffffff" stroke-width="1.3" stroke-opacity="0.62"/><line x1="-2967.3" y1="589.9" x2="-2150.2" y2="551.4" stroke="#ffffff" stroke-width="1.3" stroke-opacity="0.62"/><line x1="4973.8" y1="598.5" x2="4007.1" y2="551.5" stroke="#ffffff" stroke-width="1.3" stroke-opacity="0.62"/><line x1="-2948.1" y1="594.2" x2="-1977.4" y2="546.8" stroke="#ffffff" stroke-width="1.3" stroke-opacity="0.62"/><line x1="4947.8" y1="602.9" x2="3835.0" y2="546.8" stroke="#ffffff" stroke-width="1.3" stroke-opacity="0.62"/><line x1="-2927.8" y1="598.7" x2="-1819.0" y2="542.5" stroke="#ffffff" stroke-width="1.3" stroke-opacity="0.62"/><line x1="4920.2" y1="607.6" x2="3677.4" y2="542.5" stroke="#ffffff" stroke-width="1.3" stroke-opacity="0.62"/><line x1="-2906.2" y1="603.5" x2="-1673.2" y2="538.6" stroke="#ffffff" stroke-width="1.3" stroke-opacity="0.62"/><line x1="4891.0" y1="612.6" x2="3532.7" y2="538.5" stroke="#ffffff" stroke-width="1.3" stroke-opacity="0.62"/><line x1="-2988.6" y1="614.3" x2="-1538.7" y2="535.0" stroke="#ffffff" stroke-width="1.3" stroke-opacity="0.62"/><line x1="4971.9" y1="624.3" x2="3399.1" y2="534.9" stroke="#ffffff" stroke-width="1.3" stroke-opacity="0.62"/><line x1="-2966.8" y1="620.2" x2="-1414.2" y2="531.7" stroke="#ffffff" stroke-width="1.3" stroke-opacity="0.62"/><line x1="4941.3" y1="630.3" x2="3275.7" y2="531.5" stroke="#ffffff" stroke-width="1.3" stroke-opacity="0.62"/><line x1="-2943.5" y1="626.4" x2="-1298.6" y2="528.6" stroke="#ffffff" stroke-width="1.3" stroke-opacity="0.62"/><line x1="4908.6" y1="636.8" x2="3161.1" y2="528.4" stroke="#ffffff" stroke-width="1.3" stroke-opacity="0.62"/><line x1="-2918.4" y1="633.1" x2="-1191.0" y2="525.7" stroke="#ffffff" stroke-width="1.3" stroke-opacity="0.62"/><line x1="4873.5" y1="643.8" x2="3054.5" y2="525.5" stroke="#ffffff" stroke-width="1.3" stroke-opacity="0.62"/><line x1="-2891.4" y1="640.3" x2="-1090.6" y2="523.0" stroke="#ffffff" stroke-width="1.3" stroke-opacity="0.62"/><line x1="4969.3" y1="660.4" x2="2955.2" y2="522.8" stroke="#ffffff" stroke-width="1.3" stroke-opacity="0.62"/><line x1="-2993.3" y1="657.0" x2="-996.6" y2="520.5" stroke="#ffffff" stroke-width="1.3" stroke-opacity="0.62"/><line x1="4932.1" y1="669.3" x2="2862.3" y2="520.2" stroke="#ffffff" stroke-width="1.3" stroke-opacity="0.62"/><line x1="-2966.0" y1="666.3" x2="-908.6" y2="518.1" stroke="#ffffff" stroke-width="1.3" stroke-opacity="0.62"/><line x1="4891.8" y1="678.9" x2="2775.2" y2="517.9" stroke="#ffffff" stroke-width="1.3" stroke-opacity="0.62"/><line x1="-2936.2" y1="676.3" x2="-825.8" y2="515.9" stroke="#ffffff" stroke-width="1.3" stroke-opacity="0.62"/><line x1="4847.9" y1="689.3" x2="2693.5" y2="515.6" stroke="#ffffff" stroke-width="1.3" stroke-opacity="0.62"/><line x1="-2903.6" y1="687.3" x2="-748.0" y2="513.8" stroke="#ffffff" stroke-width="1.3" stroke-opacity="0.62"/><line x1="4965.2" y1="714.9" x2="2616.7" y2="513.5" stroke="#ffffff" stroke-width="1.3" stroke-opacity="0.62"/><line x1="-2867.7" y1="699.4" x2="-674.6" y2="511.8" stroke="#ffffff" stroke-width="1.3" stroke-opacity="0.62"/><line x1="4918.0" y1="728.9" x2="2544.3" y2="511.5" stroke="#ffffff" stroke-width="1.3" stroke-opacity="0.62"/><line x1="-2828.1" y1="712.8" x2="-605.3" y2="510.0" stroke="#ffffff" stroke-width="1.3" stroke-opacity="0.62"/><line x1="4865.6" y1="744.4" x2="2475.9" y2="509.7" stroke="#ffffff" stroke-width="1.3" stroke-opacity="0.62"/><line x1="-2964.7" y1="745.3" x2="-539.7" y2="508.2" stroke="#ffffff" stroke-width="1.3" stroke-opacity="0.62"/><line x1="4807.2" y1="761.8" x2="2411.3" y2="507.9" stroke="#ffffff" stroke-width="1.3" stroke-opacity="0.62"/><line x1="-2923.5" y1="764.1" x2="-477.6" y2="506.6" stroke="#ffffff" stroke-width="1.3" stroke-opacity="0.62"/><line x1="4958.5" y1="806.2" x2="2350.1" y2="506.2" stroke="#ffffff" stroke-width="1.3" stroke-opacity="0.62"/><line x1="-2876.9" y1="785.5" x2="-418.7" y2="505.0" stroke="#ffffff" stroke-width="1.3" stroke-opacity="0.62"/><line x1="4893.7" y1="831.7" x2="2292.1" y2="504.7" stroke="#ffffff" stroke-width="1.3" stroke-opacity="0.62"/><line x1="-2823.5" y1="809.8" x2="-362.7" y2="503.5" stroke="#ffffff" stroke-width="1.3" stroke-opacity="0.62"/><line x1="4819.1" y1="861.1" x2="2237.0" y2="503.2" stroke="#ffffff" stroke-width="1.3" stroke-opacity="0.62"/><line x1="-2761.9" y1="838.0" x2="-309.5" y2="502.1" stroke="#ffffff" stroke-width="1.3" stroke-opacity="0.62"/><line x1="4732.1" y1="895.4" x2="2184.6" y2="501.7" stroke="#ffffff" stroke-width="1.3" stroke-opacity="0.62"/><line x1="-2962.0" y1="912.3" x2="-258.8" y2="500.7" stroke="#ffffff" stroke-width="1.3" stroke-opacity="0.62"/><line x1="4944.9" y1="990.8" x2="2134.8" y2="500.4" stroke="#ffffff" stroke-width="1.3" stroke-opacity="0.62"/><line x1="-2895.3" y1="959.4" x2="-210.5" y2="499.4" stroke="#ffffff" stroke-width="1.3" stroke-opacity="0.62"/><line x1="4841.8" y1="1051.3" x2="2087.2" y2="499.1" stroke="#ffffff" stroke-width="1.3" stroke-opacity="0.62"/><line x1="-2813.7" y1="1017.2" x2="-164.3" y2="498.2" stroke="#ffffff" stroke-width="1.3" stroke-opacity="0.62"/><line x1="4713.0" y1="1126.8" x2="2041.9" y2="497.8" stroke="#ffffff" stroke-width="1.3" stroke-opacity="0.62"/><line x1="-2711.4" y1="1089.7" x2="-120.2" y2="497.0" stroke="#ffffff" stroke-width="1.3" stroke-opacity="0.62"/><line x1="4547.6" y1="1223.9" x2="1998.5" y2="496.6" stroke="#ffffff" stroke-width="1.3" stroke-opacity="0.62"/><line x1="-2579.4" y1="1183.1" x2="-78.1" y2="495.8" stroke="#ffffff" stroke-width="1.3" stroke-opacity="0.62"/><line x1="4902.9" y1="1561.4" x2="1957.1" y2="495.5" stroke="#ffffff" stroke-width="1.3" stroke-opacity="0.62"/><line x1="-2952.3" y1="1497.1" x2="-37.7" y2="494.8" stroke="#ffffff" stroke-width="1.3" stroke-opacity="0.62"/><line x1="4653.6" y1="1847.5" x2="1917.5" y2="494.4" stroke="#ffffff" stroke-width="1.3" stroke-opacity="0.62"/><line x1="-2778.0" y1="1771.0" x2="1.0" y2="493.7" stroke="#ffffff" stroke-width="1.3" stroke-opacity="0.62"/><line x1="4232.5" y1="2330.9" x2="1879.5" y2="493.4" stroke="#ffffff" stroke-width="1.3" stroke-opacity="0.62"/><line x1="-2480.9" y1="2237.7" x2="38.1" y2="492.7" stroke="#ffffff" stroke-width="1.3" stroke-opacity="0.62"/><line x1="2792.2" y1="2253.6" x2="1843.0" y2="492.4" stroke="#ffffff" stroke-width="1.3" stroke-opacity="0.62"/><line x1="-1142.1" y1="2200.6" x2="73.7" y2="491.8" stroke="#ffffff" stroke-width="1.3" stroke-opacity="0.62"/><line x1="1465.4" y1="2182.3" x2="1808.1" y2="491.4" stroke="#ffffff" stroke-width="1.3" stroke-opacity="0.62"/><line x1="142.4" y1="2165.0" x2="107.9" y2="490.9" stroke="#ffffff" stroke-width="1.3" stroke-opacity="0.62"/><line x1="-586.1" y1="2990.5" x2="1774.5" y2="490.5" stroke="#ffffff" stroke-width="1.3" stroke-opacity="0.62"/><line x1="1375.8" y1="2130.9" x2="140.8" y2="490.0" stroke="#ffffff" stroke-width="1.3" stroke-opacity="0.62"/><line x1="-1953.9" y1="1998.7" x2="1711.2" y2="488.8" stroke="#ffffff" stroke-width="1.3" stroke-opacity="0.62"/><line x1="3701.4" y1="2066.5" x2="203.0" y2="488.3" stroke="#ffffff" stroke-width="1.3" stroke-opacity="0.62"/><line x1="-2938.5" y1="1945.8" x2="1681.3" y2="488.0" stroke="#ffffff" stroke-width="1.3" stroke-opacity="0.62"/><line x1="4798.8" y1="2036.1" x2="232.4" y2="487.5" stroke="#ffffff" stroke-width="1.3" stroke-opacity="0.62"/><line x1="-2554.6" y1="1563.0" x2="1652.5" y2="487.2" stroke="#ffffff" stroke-width="1.3" stroke-opacity="0.62"/><line x1="4445.7" y1="1623.7" x2="260.7" y2="486.8" stroke="#ffffff" stroke-width="1.3" stroke-opacity="0.62"/><line x1="-2326.8" y1="1335.8" x2="1624.7" y2="486.4" stroke="#ffffff" stroke-width="1.3" stroke-opacity="0.62"/><line x1="4238.0" y1="1381.1" x2="288.0" y2="486.0" stroke="#ffffff" stroke-width="1.3" stroke-opacity="0.62"/><line x1="-2892.3" y1="1318.2" x2="1597.9" y2="485.7" stroke="#ffffff" stroke-width="1.3" stroke-opacity="0.62"/><line x1="4870.7" y1="1370.9" x2="314.4" y2="485.3" stroke="#ffffff" stroke-width="1.3" stroke-opacity="0.62"/><line x1="-2649.9" y1="1173.1" x2="1572.1" y2="485.0" stroke="#ffffff" stroke-width="1.3" stroke-opacity="0.62"/><line x1="4628.1" y1="1214.3" x2="339.9" y2="484.6" stroke="#ffffff" stroke-width="1.3" stroke-opacity="0.62"/><line x1="-2476.7" y1="1069.4" x2="1547.1" y2="484.3" stroke="#ffffff" stroke-width="1.3" stroke-opacity="0.62"/><line x1="4455.7" y1="1103.0" x2="364.6" y2="484.0" stroke="#ffffff" stroke-width="1.3" stroke-opacity="0.62"/><line x1="-2873.3" y1="1060.7" x2="1523.0" y2="483.7" stroke="#ffffff" stroke-width="1.3" stroke-opacity="0.62"/><line x1="4900.2" y1="1097.9" x2="388.4" y2="483.3" stroke="#ffffff" stroke-width="1.3" stroke-opacity="0.62"/><line x1="-2696.0" y1="984.9" x2="1499.6" y2="483.0" stroke="#ffffff" stroke-width="1.3" stroke-opacity="0.62"/><line x1="4716.4" y1="1015.9" x2="411.5" y2="482.7" stroke="#ffffff" stroke-width="1.3" stroke-opacity="0.62"/><line x1="-2557.5" y1="925.7" x2="1477.0" y2="482.4" stroke="#ffffff" stroke-width="1.3" stroke-opacity="0.62"/><line x1="4573.6" y1="952.3" x2="433.8" y2="482.1" stroke="#ffffff" stroke-width="1.3" stroke-opacity="0.62"/><line x1="-2863.0" y1="920.5" x2="1455.2" y2="481.8" stroke="#ffffff" stroke-width="1.3" stroke-opacity="0.62"/><line x1="4916.3" y1="949.2" x2="455.4" y2="481.5" stroke="#ffffff" stroke-width="1.3" stroke-opacity="0.62"/><line x1="-2723.1" y1="874.0" x2="1434.0" y2="481.2" stroke="#ffffff" stroke-width="1.3" stroke-opacity="0.62"/><line x1="4768.5" y1="898.9" x2="476.4" y2="481.0" stroke="#ffffff" stroke-width="1.3" stroke-opacity="0.62"/><line x1="-2994.4" y1="869.8" x2="1413.5" y2="480.7" stroke="#ffffff" stroke-width="1.3" stroke-opacity="0.62"/><line x1="4647.6" y1="857.7" x2="496.7" y2="480.4" stroke="#ffffff" stroke-width="1.3" stroke-opacity="0.62"/><line x1="-2856.5" y1="832.3" x2="1393.6" y2="480.1" stroke="#ffffff" stroke-width="1.3" stroke-opacity="0.62"/><line x1="4926.4" y1="855.7" x2="516.5" y2="479.9" stroke="#ffffff" stroke-width="1.3" stroke-opacity="0.62"/><line x1="-2741.0" y1="800.9" x2="1374.3" y2="479.6" stroke="#ffffff" stroke-width="1.3" stroke-opacity="0.62"/><line x1="4802.9" y1="821.7" x2="535.6" y2="479.4" stroke="#ffffff" stroke-width="1.3" stroke-opacity="0.62"/><line x1="-2966.3" y1="798.0" x2="1355.5" y2="479.1" stroke="#ffffff" stroke-width="1.3" stroke-opacity="0.62"/><line x1="4698.4" y1="792.9" x2="554.2" y2="478.9" stroke="#ffffff" stroke-width="1.3" stroke-opacity="0.62"/><line x1="-2852.0" y1="771.7" x2="1337.4" y2="478.6" stroke="#ffffff" stroke-width="1.3" stroke-opacity="0.62"/><line x1="4933.3" y1="791.5" x2="572.3" y2="478.4" stroke="#ffffff" stroke-width="1.3" stroke-opacity="0.62"/><line x1="-2753.6" y1="749.0" x2="1319.7" y2="478.1" stroke="#ffffff" stroke-width="1.3" stroke-opacity="0.62"/><line x1="4827.3" y1="766.9" x2="589.8" y2="477.9" stroke="#ffffff" stroke-width="1.3" stroke-opacity="0.62"/><line x1="-2946.3" y1="747.0" x2="1302.5" y2="477.6" stroke="#ffffff" stroke-width="1.3" stroke-opacity="0.62"/><line x1="4735.4" y1="745.7" x2="606.9" y2="477.5" stroke="#ffffff" stroke-width="1.3" stroke-opacity="0.62"/><line x1="-2848.8" y1="727.5" x2="1285.8" y2="477.2" stroke="#ffffff" stroke-width="1.3" stroke-opacity="0.62"/><line x1="4938.4" y1="744.6" x2="623.5" y2="477.0" stroke="#ffffff" stroke-width="1.3" stroke-opacity="0.62"/><line x1="-2763.1" y1="710.4" x2="1269.6" y2="476.7" stroke="#ffffff" stroke-width="1.3" stroke-opacity="0.62"/><line x1="4845.5" y1="726.1" x2="639.6" y2="476.6" stroke="#ffffff" stroke-width="1.3" stroke-opacity="0.62"/><line x1="-2931.3" y1="708.8" x2="1253.8" y2="476.3" stroke="#ffffff" stroke-width="1.3" stroke-opacity="0.62"/><line x1="4763.5" y1="709.7" x2="655.3" y2="476.2" stroke="#ffffff" stroke-width="1.3" stroke-opacity="0.62"/><line x1="-2846.3" y1="693.8" x2="1238.5" y2="475.9" stroke="#ffffff" stroke-width="1.3" stroke-opacity="0.62"/><line x1="4942.2" y1="708.9" x2="670.6" y2="475.8" stroke="#ffffff" stroke-width="1.3" stroke-opacity="0.62"/><line x1="-2770.4" y1="680.5" x2="1223.5" y2="475.5" stroke="#ffffff" stroke-width="1.3" stroke-opacity="0.62"/><line x1="4859.6" y1="694.4" x2="685.5" y2="475.4" stroke="#ffffff" stroke-width="1.3" stroke-opacity="0.62"/><line x1="-2919.7" y1="679.2" x2="1209.0" y2="475.1" stroke="#ffffff" stroke-width="1.3" stroke-opacity="0.62"/><line x1="4785.6" y1="681.5" x2="700.1" y2="475.0" stroke="#ffffff" stroke-width="1.3" stroke-opacity="0.62"/><line x1="-2844.3" y1="667.3" x2="1194.8" y2="474.7" stroke="#ffffff" stroke-width="1.3" stroke-opacity="0.62"/><line x1="4945.3" y1="680.8" x2="714.2" y2="474.6" stroke="#ffffff" stroke-width="1.3" stroke-opacity="0.62"/><line x1="-2985.0" y1="666.2" x2="1180.9" y2="474.3" stroke="#ffffff" stroke-width="1.3" stroke-opacity="0.62"/><line x1="4870.9" y1="669.2" x2="728.0" y2="474.2" stroke="#ffffff" stroke-width="1.3" stroke-opacity="0.62"/><line x1="-2910.5" y1="655.6" x2="1167.5" y2="474.0" stroke="#ffffff" stroke-width="1.3" stroke-opacity="0.62"/><line x1="4803.5" y1="658.6" x2="741.5" y2="473.9" stroke="#ffffff" stroke-width="1.3" stroke-opacity="0.62"/><line x1="-2842.8" y1="645.9" x2="1154.3" y2="473.6" stroke="#ffffff" stroke-width="1.3" stroke-opacity="0.62"/><line x1="4947.7" y1="658.1" x2="754.6" y2="473.5" stroke="#ffffff" stroke-width="1.3" stroke-opacity="0.62"/><line x1="-2970.0" y1="645.0" x2="1141.5" y2="473.2" stroke="#ffffff" stroke-width="1.3" stroke-opacity="0.62"/><line x1="4880.1" y1="648.6" x2="767.4" y2="473.2" stroke="#ffffff" stroke-width="1.3" stroke-opacity="0.62"/><line x1="-2902.9" y1="636.3" x2="1129.0" y2="472.9" stroke="#ffffff" stroke-width="1.3" stroke-opacity="0.62"/><line x1="4818.2" y1="639.8" x2="779.9" y2="472.8" stroke="#ffffff" stroke-width="1.3" stroke-opacity="0.62"/><line x1="-2841.5" y1="628.3" x2="1116.8" y2="472.6" stroke="#ffffff" stroke-width="1.3" stroke-opacity="0.62"/><line x1="4949.7" y1="639.4" x2="792.1" y2="472.5" stroke="#ffffff" stroke-width="1.3" stroke-opacity="0.62"/><line x1="-2957.5" y1="627.5" x2="1104.8" y2="472.2" stroke="#ffffff" stroke-width="1.3" stroke-opacity="0.62"/><line x1="4887.7" y1="631.4" x2="804.1" y2="472.2" stroke="#ffffff" stroke-width="1.3" stroke-opacity="0.62"/><line x1="-2896.6" y1="620.2" x2="1093.2" y2="471.9" stroke="#ffffff" stroke-width="1.3" stroke-opacity="0.62"/><line x1="4830.5" y1="624.1" x2="815.7" y2="471.9" stroke="#ffffff" stroke-width="1.3" stroke-opacity="0.62"/><line x1="-2840.4" y1="613.5" x2="1081.8" y2="471.6" stroke="#ffffff" stroke-width="1.3" stroke-opacity="0.62"/><line x1="4951.4" y1="623.7" x2="827.1" y2="471.6" stroke="#ffffff" stroke-width="1.3" stroke-opacity="0.62"/><line x1="-2947.1" y1="612.9" x2="1070.7" y2="471.3" stroke="#ffffff" stroke-width="1.3" stroke-opacity="0.62"/><line x1="4894.1" y1="617.0" x2="838.2" y2="471.3" stroke="#ffffff" stroke-width="1.3" stroke-opacity="0.62"/><line x1="-2891.3" y1="606.7" x2="1059.8" y2="471.0" stroke="#ffffff" stroke-width="1.3" stroke-opacity="0.62"/><line x1="4841.0" y1="610.7" x2="849.1" y2="471.0" stroke="#ffffff" stroke-width="1.3" stroke-opacity="0.62"/><line x1="-2993.6" y1="606.1" x2="1049.2" y2="470.7" stroke="#ffffff" stroke-width="1.3" stroke-opacity="0.62"/><line x1="4952.9" y1="610.4" x2="859.8" y2="470.7" stroke="#ffffff" stroke-width="1.3" stroke-opacity="0.62"/><line x1="-2938.3" y1="600.4" x2="1038.8" y2="470.4" stroke="#ffffff" stroke-width="1.3" stroke-opacity="0.62"/><line x1="4899.7" y1="604.6" x2="870.2" y2="470.4" stroke="#ffffff" stroke-width="1.3" stroke-opacity="0.62"/><line x1="-2886.7" y1="595.1" x2="1028.6" y2="470.2" stroke="#ffffff" stroke-width="1.3" stroke-opacity="0.62"/><line x1="4850.1" y1="599.2" x2="880.4" y2="470.1" stroke="#ffffff" stroke-width="1.3" stroke-opacity="0.62"/><line x1="-2981.7" y1="594.6" x2="1018.7" y2="469.9" stroke="#ffffff" stroke-width="1.3" stroke-opacity="0.62"/><line x1="4954.1" y1="598.9" x2="890.4" y2="469.9" stroke="#ffffff" stroke-width="1.3" stroke-opacity="0.62"/><line x1="-2930.6" y1="589.6" x2="1008.9" y2="469.6" stroke="#ffffff" stroke-width="1.3" stroke-opacity="0.62"/><line x1="4904.4" y1="593.8" x2="900.1" y2="469.6" stroke="#ffffff" stroke-width="1.3" stroke-opacity="0.62"/><line x1="-2882.8" y1="585.0" x2="999.4" y2="469.4" stroke="#ffffff" stroke-width="1.3" stroke-opacity="0.62"/><line x1="4857.9" y1="589.1" x2="909.7" y2="469.4" stroke="#ffffff" stroke-width="1.3" stroke-opacity="0.62"/><line x1="-2971.4" y1="584.6" x2="990.1" y2="469.1" stroke="#ffffff" stroke-width="1.3" stroke-opacity="0.62"/><line x1="4955.2" y1="588.9" x2="919.0" y2="469.1" stroke="#ffffff" stroke-width="1.3" stroke-opacity="0.62"/><line x1="-2924.0" y1="580.2" x2="980.9" y2="468.9" stroke="#ffffff" stroke-width="1.3" stroke-opacity="0.62"/><line x1="4908.6" y1="584.5" x2="928.2" y2="468.9" stroke="#ffffff" stroke-width="1.3" stroke-opacity="0.62"/><line x1="-2879.4" y1="576.2" x2="972.0" y2="468.6" stroke="#ffffff" stroke-width="1.3" stroke-opacity="0.62"/><line x1="4864.8" y1="580.3" x2="937.2" y2="468.6" stroke="#ffffff" stroke-width="1.3" stroke-opacity="0.62"/><line x1="-2962.4" y1="575.8" x2="963.2" y2="468.4" stroke="#ffffff" stroke-width="1.3" stroke-opacity="0.62"/><line x1="4956.1" y1="580.1" x2="946.0" y2="468.4" stroke="#ffffff" stroke-width="1.3" stroke-opacity="0.62"/><line x1="-2918.1" y1="572.0" x2="954.6" y2="468.1" stroke="#ffffff" stroke-width="1.3" stroke-opacity="0.62"/><line x1="4912.3" y1="576.2" x2="954.6" y2="468.1" stroke="#ffffff" stroke-width="1.3" stroke-opacity="0.62"/><line x1="-2239.6" y1="2851.6" x2="1742.2" y2="489.6" stroke="#ff7080" stroke-width="1.4" stroke-opacity="0.95"/><line x1="3848.3" y1="2964.9" x2="172.5" y2="489.1" stroke="#10aaff" stroke-width="1.6" stroke-opacity="1"/></g><g fill="#ffffff" filter="url(#blur8)" opacity="0.18">
<ellipse cx="1040" cy="380" rx="130" ry="13"/><ellipse cx="1010" cy="368" rx="80" ry="12"/><ellipse cx="930" cy="352" rx="40" ry="9"/>
<ellipse cx="1170" cy="366" rx="90" ry="14"/><ellipse cx="1215" cy="340" rx="35" ry="14"/><ellipse cx="1300" cy="345" rx="90" ry="14"/><ellipse cx="1385" cy="332" rx="60" ry="12"/>
<ellipse cx="1330" cy="400" rx="110" ry="8"/>
<ellipse cx="590" cy="398" rx="105" ry="12"/><ellipse cx="590" cy="378" rx="40" ry="9"/><ellipse cx="530" cy="388" rx="40" ry="9"/>
<ellipse cx="800" cy="405" rx="70" ry="7"/><ellipse cx="900" cy="400" rx="40" ry="6"/>
<ellipse cx="735" cy="296" rx="55" ry="14"/><ellipse cx="726" cy="268" rx="22" ry="18"/><ellipse cx="700" cy="240" rx="12" ry="10"/>
<ellipse cx="905" cy="250" rx="36" ry="8"/><ellipse cx="496" cy="232" rx="12" ry="12" opacity="0.5"/>
</g>
<g fill="#ffffff" filter="url(#blur4)" opacity="0.10">
<path d="M905 392 Q912 372 950 372 Q985 356 1030 364 Q1075 352 1110 368 Q1150 362 1180 376 Q1170 392 1100 393 Z"/>
<path d="M1150 380 Q1180 350 1215 345 Q1235 320 1262 335 Q1310 322 1350 330 Q1395 318 1424 322 V352 Q1340 366 1260 372 Z"/>
<path d="M500 402 Q540 380 575 384 Q590 366 612 374 Q650 384 690 400 Z"/>
<path d="M690 300 Q700 282 714 280 Q716 254 734 256 Q748 274 758 284 Q790 292 792 304 Z"/>
</g><g stroke-linejoin="round">
<polygon points="728,548 940,527 1148,548 932,582" fill="#2d5a96"/>
<polygon points="798,547.3 940,532.7 1078.4,548 934,568" fill="#8b4b97"/>
<polygon points="728,548 932,582 932,927.5 746.7,818.4" fill="#1f3a6b"/>
<polygon points="1148,548 932,582 932,927.5 1131,821.3" fill="#2d528b"/>
<polygon points="728,548 940,527 1148,548 1131,821.3 932,927.5 746.7,818.4" fill="none" stroke="#4c74bc" stroke-width="1.6"/>
</g><g>
<circle cx="1261" cy="276" r="12.2" fill="#4c95f2"/>
<circle cx="1260" cy="302.5" r="12.2" fill="#c78db6"/>
<circle cx="1313.4" cy="362" r="12.2" fill="#7cc95e"/>
<circle cx="1366.6" cy="302.5" r="12.2" fill="#6fa8ea"/>
<text x="1366.6" y="309.2" text-anchor="middle" font-family="Liberation Sans, sans-serif" font-size="18.5" fill="#5a80aa">Z</text>
<circle cx="1313.8" cy="217.3" r="12.2" fill="#88ca7c"/>
<text x="1313.8" y="224" text-anchor="middle" font-family="Liberation Sans, sans-serif" font-size="18.5" fill="#3d5b70">Y</text>
<line x1="1313.4" y1="229" x2="1313.4" y2="290" stroke="#3daa12" stroke-width="4.2"/>
<line x1="1313" y1="290" x2="1360" y2="277.6" stroke="#f2101c" stroke-width="4.6"/>
<line x1="1313" y1="290" x2="1357" y2="301" stroke="#0038f2" stroke-width="4.6"/>
<circle cx="1358.6" cy="301.6" r="2.6" fill="#4c95f2"/>
<circle cx="1367.3" cy="276.3" r="12.2" fill="#e9627c"/>
<text x="1367.3" y="283" text-anchor="middle" font-family="Liberation Sans, sans-serif" font-size="18.5" fill="#46506a">X</text>
<line x1="1340" y1="282.9" x2="1361" y2="277.3" stroke="#f2101c" stroke-width="4.6"/>
</g></svg></div>
<div style="left:482px;top:1206px;width:944px;height:14px;background:#272727;"></div>
<div style="left:482px;top:1160px;width:156px;height:50px;background:#272727;"></div>
<div style="left:484px;top:1162px;width:152px;height:44px;background:#2f2f2f;"></div>
<div style="left:636px;top:1160px;width:158px;height:48px;background:#272727;"></div>
<div style="left:638px;top:1162px;width:154px;height:46px;background:#373737;"></div>
<div style="left:484px;top:1208px;width:940px;height:2px;background:#000;"></div>
<div style="left:484px;top:1210px;width:2px;height:10px;background:#000;"></div>
<div style="left:1422px;top:1210px;width:2px;height:10px;background:#000;"></div>
<div style="left:486px;top:1210px;width:936px;height:10px;background:#333;"></div>
<div style="left:1109px;top:1210px;width:30px;height:10px;box-sizing:border-box;border:1px solid #4a4a4a;background:#2e2e2e"></div>
<svg style="left:495px;top:1173px" width="27" height="24" viewBox="0 0 27 24"><rect x="1.3" y="1.3" width="23.6" height="20.6" rx="3.4" fill="none" stroke="#c9cbff" stroke-width="2.4"/><path d="M1.4 6 H24.8" stroke="#c9cbff" stroke-width="1.8"/><g fill="#a9acdc"><rect x="5" y="9" width="16.2" height="2.2"/><rect x="5" y="13" width="13.4" height="2.2"/><rect x="5" y="17" width="4.4" height="2.2"/><rect x="11" y="17" width="10.2" height="2.2"/></g></svg>
<span class="t " style="left:532px;top:1171px;color:#c4c4c4;">Console</span>
<svg style="left:648px;top:1172px" width="28" height="25" viewBox="0 0 28 25"><path d="M22.6 5.4 A11.2 11.2 0 1 0 22.6 19.2" fill="none" stroke="#c9cbff" stroke-width="2.4" stroke-linecap="round"/><path d="M12 6 V12.6 L16 16" fill="none" stroke="#c9cbff" stroke-width="2.4" stroke-linecap="round"/><g stroke="#c9cbff" stroke-width="2" stroke-linecap="round"><path d="M18 10 H26.4"/><path d="M19.4 13.4 H23.4" stroke="#a9acdc"/><path d="M19.4 16.8 H23.4" stroke="#a9acdc" stroke-width="0"/></g></svg>
<span class="t " style="left:686px;top:1171px;color:#ffffff;">Timeline</span>
<svg style="left:1394.5px;top:1175px;" width="15" height="19" viewBox="0 0 15 19"><g fill="#c8c8c8"><rect x="0" y="0" width="14.5" height="2.6" rx="1"/><rect x="0" y="7.7" width="14.5" height="2.6" rx="1"/><rect x="0" y="15.6" width="14.5" height="2.6" rx="1"/></g></svg>
<div style="left:1432px;top:124px;width:998px;height:1091px;background:#272727;"></div>
<div style="left:1432px;top:78px;width:166px;height:48px;background:#272727;"></div>
<div style="left:1434px;top:80px;width:162px;height:46px;background:#373737;"></div>
<div style="left:1434px;top:126px;width:994px;height:52px;background:#373737;"></div>
<div style="left:1434px;top:180px;width:994px;height:1035px;background:#373737;"></div>
<svg style="left:1444px;top:90px" width="28" height="24" viewBox="0 0 28 24"><rect x="0.4" y="0.2" width="27" height="23.6" rx="2.6" fill="#c9cbff"/><rect x="3" y="7" width="21.8" height="14.2" rx="1" fill="#363636"/><rect x="8" y="2.6" width="16" height="2" rx="1" fill="#363636"/><path d="M10 14.2 H23" stroke="#c9cbff" stroke-width="2"/><rect x="5.4" y="11.6" width="4.6" height="5.4" rx="2" fill="#363636" stroke="#c9cbff" stroke-width="1.8"/><path d="M3 14.2 H5" stroke="#c9cbff" stroke-width="1.6"/></svg>
<span class="t " style="left:1481.8px;top:89px;color:#ffffff;">Inspector</span>
<svg style="left:2398.5px;top:93px;" width="15" height="19" viewBox="0 0 15 19"><g fill="#c8c8c8"><rect x="0" y="0" width="14.5" height="2.6" rx="1"/><rect x="0" y="7.7" width="14.5" height="2.6" rx="1"/><rect x="0" y="15.6" width="14.5" height="2.6" rx="1"/></g></svg>
<svg style="left:1452.75px;top:140.75px" width="22.5" height="22.5" viewBox="0 0 22.5 22.5"><g fill="#c2c2c2"><rect x="0" y="9.45" width="22.5" height="3.6" rx="1.5"/><rect x="9.45" y="0" width="3.6" height="22.5" rx="1.5"/></g></svg>
<span class="t " style="left:1484px;top:138.5px;color:#c4c4c4;">Component</span>
<svg style="left:0px;top:0px" width="2434" height="200" viewBox="0 0 2434 200"><g fill="none" stroke-width="3.4" stroke-linecap="round" stroke-linejoin="round"><path d="M2295.6 142.4 L2285.2 152 L2295.6 161.8" stroke="#c6c6c6"/><path d="M2336.6 142.4 L2347 152 L2336.6 161.8" stroke="#7a7a7a"/></g><g fill="none" stroke="#cfcfcf" stroke-width="2.2"><rect x="2384" y="150" width="19.6" height="15" rx="2.4"/><path d="M2387.8 150 V146 A6 6 0 0 1 2399.8 146 V150"/></g><circle cx="2393.8" cy="155.6" r="1.7" fill="#cfcfcf"/><rect x="2393" y="156" width="1.6" height="4.8" fill="#cfcfcf"/></svg>
<svg style="left:1538px;top:204px" width="34.5" height="38.5" viewBox="0 0 34.5 38.5"><path d="M17.25 0 L34.5 9.625 L17.25 19.25 L0 9.625 Z" fill="#7de6ff"/><path d="M0 9.625 L17.25 19.25 L17.25 38.5 L0 28.875 Z" fill="#5fa3b6"/><path d="M34.5 9.625 L17.25 19.25 L17.25 38.5 L34.5 28.875 Z" fill="#6ec6df"/><path d="M6.90 5.78 L10.01 4.04 L27.26 13.67 V32.92 L24.15 34.65 V15.40 Z" fill="#2b3a42"/></svg>
<div style="left:1594px;top:208px;width:28px;height:28px;box-sizing:border-box;border:2px solid #282828;background:#454545"></div>
<svg style="left:1599px;top:213px" width="18" height="18" viewBox="0 0 18 18"><path d="M1 10.2 L3.4 8.4 L6.6 12 C9 7 12.5 3 17 0.6 L17.4 2 C13.5 6 10.5 11 8.2 17 L6.2 17.2 Z" fill="#c2c2c2"/></svg>
<div style="left:1634px;top:200px;width:642px;height:40px;box-sizing:border-box;border:2px solid #333333;background:#414141"></div>
<span class="t " style="left:1642.5px;top:208px;color:#c4c4c4;">BoxAnimated</span>
<div style="left:2284px;top:208px;width:28px;height:28px;box-sizing:border-box;border:2px solid #282828;background:#454545"></div>
<span class="t " style="left:2320px;top:207px;color:#c4c4c4;">Static</span>
<span class="t " style="left:1544.5px;top:268.5px;color:#c4c4c4;">Prefab</span>
<div style="left:1654px;top:256px;width:110px;height:50px;box-sizing:border-box;border:2px solid #272727;border-radius:9px;background:#454545"></div>
<span class="t " style="left:1680px;top:266.5px;color:#c4c4c4;">Open</span>
<div style="left:1772px;top:256px;width:110px;height:50px;box-sizing:border-box;border:2px solid #272727;border-radius:9px;background:#454545"></div>
<span class="t " style="left:1794.5px;top:266.5px;color:#c4c4c4;">Select</span>
<div style="left:1900px;top:262px;width:202px;height:40px;box-sizing:border-box;border:2px solid #333333;background:#414141"></div>
<span class="t " style="left:1908px;top:269px;color:#c4c4c4;">Overrides</span>
<svg style="left:2069px;top:274px" width="22" height="11" viewBox="0 0 22 11"><path d="M-0.6 0 L22.6 0 L11.0 11.4 Z" fill="#b4b4b4"/></svg>
<div style="left:1434px;top:330px;width:994px;height:2px;background:#2a2a2a;"></div>
<div style="left:1434px;top:332px;width:994px;height:40px;background:#2f2f2f;"></div>
<svg style="left:1440.4px;top:346.8px" width="19.6" height="10.4" viewBox="0 0 19.6 10.4"><path d="M-0.6 0 L20.200000000000003 0 L9.8 10.8 Z" fill="#b4b4b4"/></svg>
<span class="t " style="left:1472px;top:338.5px;color:#c4c4c4;">Transform</span>
<svg style="left:2395px;top:345px;" width="15" height="19" viewBox="0 0 15 19"><g fill="#c8c8c8"><rect x="0" y="0" width="14.5" height="2.6" rx="1"/><rect x="0" y="7.7" width="14.5" height="2.6" rx="1"/><rect x="0" y="15.6" width="14.5" height="2.6" rx="1"/></g></svg>
<span class="t " style="left:1466px;top:393px;color:#c4c4c4;">Position</span>
<div style="left:1810px;top:388px;width:192px;height:38px;box-sizing:border-box;border:2px solid #333333;background:#383838"></div>
<div style="left:1843px;top:390px;width:157px;height:34px;background:#414141"></div>
<span class="t " style="left:1819px;top:392.5px;color:#c4c4c4;">X</span>
<span class="t " style="left:1850px;top:395px;color:#c4c4c4;">0.24045</span>
<div style="left:2016px;top:388px;width:196px;height:38px;box-sizing:border-box;border:2px solid #333333;background:#383838"></div>
<div style="left:2049px;top:390px;width:161px;height:34px;background:#414141"></div>
<span class="t " style="left:2025px;top:392.5px;color:#c4c4c4;">Y</span>
<span class="t " style="left:2056px;top:395px;color:#c4c4c4;">1.02023</span>
<div style="left:2226px;top:388px;width:194px;height:38px;box-sizing:border-box;border:2px solid #333333;background:#383838"></div>
<div style="left:2259px;top:390px;width:159px;height:34px;background:#414141"></div>
<span class="t " style="left:2235px;top:392.5px;color:#c4c4c4;">Z</span>
<span class="t " style="left:2266px;top:395px;color:#c4c4c4;">-0.09545</span>
<span class="t " style="left:1466px;top:443px;color:#c4c4c4;">Rotation</span>
<div style="left:1810px;top:438px;width:192px;height:38px;box-sizing:border-box;border:2px solid #333333;background:#383838"></div>
<div style="left:1843px;top:440px;width:157px;height:34px;background:#414141"></div>
<span class="t " style="left:1819px;top:442.5px;color:#c4c4c4;">X</span>
<span class="t " style="left:1850px;top:445px;color:#c4c4c4;">0</span>
<div style="left:2016px;top:438px;width:196px;height:38px;box-sizing:border-box;border:2px solid #333333;background:#383838"></div>
<div style="left:2049px;top:440px;width:161px;height:34px;background:#414141"></div>
<span class="t " style="left:2025px;top:442.5px;color:#c4c4c4;">Y</span>
<span class="t " style="left:2056px;top:445px;color:#c4c4c4;">0</span>
<div style="left:2226px;top:438px;width:194px;height:38px;box-sizing:border-box;border:2px solid #333333;background:#383838"></div>
<div style="left:2259px;top:440px;width:159px;height:34px;background:#414141"></div>
<span class="t " style="left:2235px;top:442.5px;color:#c4c4c4;">Z</span>
<span class="t " style="left:2266px;top:445px;color:#c4c4c4;">0</span>
<span class="t " style="left:1466px;top:493px;color:#c4c4c4;">Scale</span>
<div style="left:1810px;top:488px;width:192px;height:38px;box-sizing:border-box;border:2px solid #333333;background:#383838"></div>
<div style="left:1843px;top:490px;width:157px;height:34px;background:#414141"></div>
<span class="t " style="left:1819px;top:492.5px;color:#c4c4c4;">X</span>
<span class="t " style="left:1850px;top:495px;color:#c4c4c4;">1</span>
<div style="left:2016px;top:488px;width:196px;height:38px;box-sizing:border-box;border:2px solid #333333;background:#383838"></div>
<div style="left:2049px;top:490px;width:161px;height:34px;background:#414141"></div>
<span class="t " style="left:2025px;top:492.5px;color:#c4c4c4;">Y</span>
<span class="t " style="left:2056px;top:495px;color:#c4c4c4;">1</span>
<div style="left:2226px;top:488px;width:194px;height:38px;box-sizing:border-box;border:2px solid #333333;background:#383838"></div>
<div style="left:2259px;top:490px;width:159px;height:34px;background:#414141"></div>
<span class="t " style="left:2235px;top:492.5px;color:#c4c4c4;">Z</span>
<span class="t " style="left:2266px;top:495px;color:#c4c4c4;">1</span>
<div style="left:1434px;top:540px;width:994px;height:2px;background:#2a2a2a;"></div>
<div style="left:1434px;top:542px;width:994px;height:40px;background:#2f2f2f;"></div>
<svg style="left:1440.4px;top:556.8px" width="19.6" height="10.4" viewBox="0 0 19.6 10.4"><path d="M-0.6 0 L20.200000000000003 0 L9.8 10.8 Z" fill="#b4b4b4"/></svg>
<div style="left:1470px;top:548px;width:28px;height:28px;box-sizing:border-box;border:2px solid #282828;background:#454545"></div>
<svg style="left:1475px;top:553px" width="18" height="18" viewBox="0 0 18 18"><path d="M1 10.2 L3.4 8.4 L6.6 12 C9 7 12.5 3 17 0.6 L17.4 2 C13.5 6 10.5 11 8.2 17 L6.2 17.2 Z" fill="#c2c2c2"/></svg>
<span class="t " style="left:1508px;top:548.5px;color:#c4c4c4;">Animator</span>
<svg style="left:2395px;top:555px;" width="15" height="19" viewBox="0 0 15 19"><g fill="#c8c8c8"><rect x="0" y="0" width="14.5" height="2.6" rx="1"/><rect x="0" y="7.7" width="14.5" height="2.6" rx="1"/><rect x="0" y="15.6" width="14.5" height="2.6" rx="1"/></g></svg>
<div style="left:1434px;top:590px;width:4px;height:50px;background:#d8983a;"></div>
<span class="t " style="left:1466px;top:603px;color:#c4c4c4;">Controller</span>
<div style="left:1810px;top:598px;width:610px;height:38px;box-sizing:border-box;border:2px solid #333333;background:#414141"></div>
<svg style="left:1817px;top:604px" width="26" height="26" viewBox="0 0 26 26"><g transform="scale(0.8666666666666667)"><g fill="#c9cbff"><rect x="0" y="0.2" width="10.6" height="8.8" rx="2.2"/><rect x="19.4" y="0.2" width="10.6" height="8.8" rx="2.2"/><rect x="0" y="21.0" width="10.6" height="8.8" rx="2.2"/><rect x="19.4" y="21.0" width="10.6" height="8.8" rx="2.2"/></g><g stroke="#c9cbff" stroke-width="1.1" fill="none"><path d="M10.6 4.6000000000000005 H19.4 M10.6 25.400000000000002 H19.4 M24.7 8.8 V21.2"/></g><g fill="#c9cbff"><path d="M12.6 2.8000000000000003 L15 4.6000000000000005 L12.6 6.4 Z"/><path d="M17.4 2.8000000000000003 L15 4.6000000000000005 L17.4 6.4 Z"/><path d="M12.6 23.6 L15 25.400000000000002 L12.6 27.200000000000003 Z"/><path d="M17.4 23.6 L15 25.400000000000002 L17.4 27.200000000000003 Z"/><path d="M22.9 13 L24.7 15 L26.5 13 Z"/></g><text x="4.4" y="19.9" font-family="Liberation Sans, sans-serif" font-size="14" fill="#fff">3D</text></g></svg>
<span class="t " style="left:1854px;top:604px;color:#c4c4c4;">AnimationController</span>
<svg style="left:2387px;top:606px" width="21" height="21" viewBox="0 0 21 21"><path d="M8.4 17.4 H1 V1 H18.4 V8.4" fill="none" stroke="#c2c2c2" stroke-width="1.6"/><path d="M8.4 8.2 L19.6 12 L15.8 13.8 L20 18 L18 20 L13.8 15.8 L12 19.6 Z" fill="#c2c2c2"/></svg>
<span class="t " style="left:1466px;top:653px;color:#c4c4c4;">Culling Mode</span>
<div style="left:1810px;top:648px;width:610px;height:38px;box-sizing:border-box;border:2px solid #333333;background:#414141"></div>
<span class="t " style="left:1818px;top:654px;color:#c4c4c4;">CullCompletely</span>
<svg style="left:2387px;top:660px" width="21" height="11" viewBox="0 0 21 11"><path d="M-0.6 0 L21.6 0 L10.5 11.4 Z" fill="#b4b4b4"/></svg>
<svg style="left:0;top:0;pointer-events:none" width="2434" height="1215" viewBox="0 0 2434 1215"><polygon fill="#ff2014" points="368.2,828.3 484,812.2 741.6,775 1149.5,714.7 1434,672 1598,645.6 1797,622.6 1792.3,619.2 1808.6,626.4 1794.7,636.1 1799,632 1598,655.9 1434,682.2 1149.5,722.8 741.6,779 484,813.9 368.2,829.7"/></svg>
</div></body></html>
